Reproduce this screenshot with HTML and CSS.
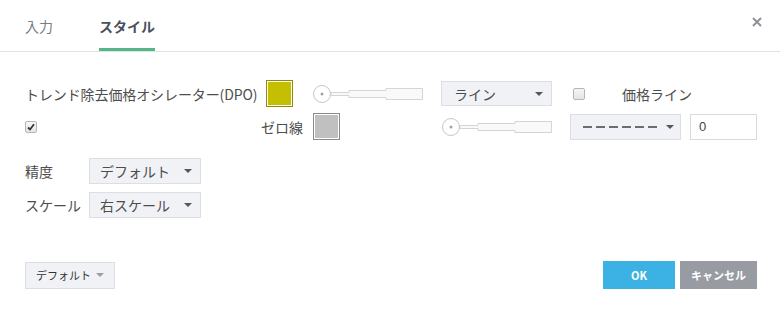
FILE: index.html
```html
<!DOCTYPE html>
<html lang="ja">

<head>
  <meta charset="UTF-8" />
  <title>スタイル</title>
  <link rel="stylesheet" href="styles.css">
</head>

<body>
  <div class="dialog">
    <div class="header">
      <div class="tabs">
        <div class="tab">入力</div>
        <div class="tab active">スタイル</div>
      </div>
      <button class="close" aria-label="閉じる">
        <svg width="10" height="10" viewBox="0 0 10 10">
          <path d="M1 1 L9 9 M9 1 L1 9" stroke="#8f919a" stroke-width="2" />
        </svg>
      </button>
    </div>

    <div class="body">
      <div class="plot-rows">
        <div class="row">
          <div class="cell-title">トレンド除去価格オシレーター(DPO)</div>
          <div class="swatch yellow"></div>
          <svg class="slider" width="110" height="20" viewBox="0 0 110 20">
            <path d="M18 8.5 H36 V6.5 H73 V4.5 H109.5 V15.5 H73 V13.5 H36 V11.5 H18 Z" fill="#f9f9f9" stroke="#d3d5da" />
            <circle cx="9" cy="10" r="8.5" fill="#fff" stroke="#c3c6ce" />
            <circle cx="9" cy="10" r="1.5" fill="#a0a2aa" />
          </svg>
          <div class="select line-select">
            <span>ライン</span>
            <i class="caret"></i>
          </div>
          <span class="check"></span>
          <span class="check-label">価格ライン</span>
        </div>

        <div class="row">
          <div class="cell-zero">
            <span class="check checked">
              <svg width="8" height="8" viewBox="0 0 8 8">
                <path d="M1 4.5 L3 6.5 L7 1.2" stroke="#333" stroke-width="1.8" fill="none" />
              </svg>
            </span>
            <span class="zero-label">ゼロ線</span>
          </div>
          <div class="swatch gray"></div>
          <svg class="slider slider-zero" width="110" height="20" viewBox="0 0 110 20">
            <path d="M18 8.5 H36 V6.5 H73 V4.5 H109.5 V15.5 H73 V13.5 H36 V11.5 H18 Z" fill="#f9f9f9" stroke="#d3d5da" />
            <circle cx="9" cy="10" r="8.5" fill="#fff" stroke="#c3c6ce" />
            <circle cx="9" cy="10" r="1.5" fill="#a0a2aa" />
          </svg>
          <div class="select dash-select">
            <svg width="74" height="4" viewBox="0 0 74 4">
              <line x1="0" y1="2" x2="74" y2="2" stroke="#6b6d74" stroke-width="2" stroke-dasharray="9 4" />
            </svg>
            <i class="caret"></i>
          </div>
          <div class="num-input">0</div>
        </div>
      </div>

      <div class="scale-rows">
        <div class="row">
          <div class="cell-label">精度</div>
          <div class="select wide">
            <span>デフォルト</span>
            <i class="caret"></i>
          </div>
        </div>
        <div class="row">
          <div class="cell-label">スケール</div>
          <div class="select wide">
            <span>右スケール</span>
            <i class="caret"></i>
          </div>
        </div>
      </div>
    </div>

    <div class="footer">
      <div class="select defaults">
        <span>デフォルト</span>
        <i class="caret light"></i>
      </div>
      <div class="actions">
        <button class="btn ok">OK</button>
        <button class="btn cancel">キャンセル</button>
      </div>
    </div>
  </div>
</body>

</html>
```

FILE: styles.css
```css
* {
  box-sizing: border-box;
}

body {
  margin: 0;
  padding: 0;
  font-family: "Noto Sans CJK JP", "Noto Sans", sans-serif;
  background: #fff;
  color: #4d4d4d;
  font-size: 14px;
}

.dialog {
  width: 780px;
  height: 313px;
}

.header {
  height: 52px;
  border-bottom: 1px solid #e0e2e6;
  display: flex;
  justify-content: space-between;
  padding: 0 18px 0 25px;
}

.tabs {
  display: flex;
  gap: 46px;
}

.tab {
  height: 51px;
  line-height: 50px;
  color: #7a7c82;
  font-size: 14px;
  border-bottom: 3px solid transparent;
  padding-top: 1px;
}

.tab.active {
  color: #4a4f5c;
  font-weight: bold;
  border-bottom-color: #52b886;
}

.close {
  border: none;
  background: none;
  padding: 0;
  width: 10px;
  height: 10px;
  margin-top: 17px;
  cursor: pointer;
  display: flex;
}

.body {
  padding: 28px 23px 0 25px;
}

.row {
  display: flex;
  align-items: center;
  height: 27px;
}

.plot-rows {
  display: flex;
  flex-direction: column;
  gap: 6px;
}

.scale-rows {
  display: flex;
  flex-direction: column;
  gap: 7px;
  margin-top: 17px;
}

.cell-title {
  width: 241px;
  white-space: nowrap;
  line-height: 20px;
  letter-spacing: -0.1px;
}

.swatch {
  width: 27px;
  height: 27px;
  border: 1px solid #8a8a8a;
  box-shadow: inset 0 0 0 1px #fff;
}

.swatch.yellow {
  background: #c4bf00;
  border-color: #8e8b00;
}

.swatch.gray {
  background: #c0c0c0;
}

.slider {
  margin-left: 20px;
  display: block;
}

.slider-zero {
  margin-left: 102px;
}

.select {
  display: flex;
  align-items: center;
  justify-content: space-between;
  height: 26px;
  background: #f1f2f6;
  border: 1px solid #dcdee3;
  padding: 0 8px 0 12px;
  color: #4d4d4d;
  line-height: 20px;
}

.line-select {
  width: 111px;
  height: 25px;
  margin-left: 18px;
}

.dash-select {
  width: 111px;
  margin-left: 18px;
  padding-left: 12px;
  padding-right: 6px;
}

.caret {
  width: 0;
  height: 0;
  border-left: 4px solid transparent;
  border-right: 4px solid transparent;
  border-top: 4px solid #55575e;
}

.caret.light {
  border-top-color: #9c9ea4;
}

.check {
  width: 12px;
  height: 12px;
  border: 1px solid #b4b6bc;
  border-radius: 2px;
  background: linear-gradient(#f6f6f6, #e4e4e4);
  display: flex;
  align-items: center;
  justify-content: center;
  margin-left: 21px;
}

.check.checked {
  margin-left: 0;
}

.check-label {
  margin-left: 37px;
}

.cell-zero {
  width: 278px;
  display: flex;
  align-items: center;
  justify-content: space-between;
}

.cell-zero + .swatch {
  margin-left: 10px;
}

.num-input {
  width: 67px;
  height: 26px;
  margin-left: 9px;
  border: 1px solid #d9dadf;
  background: #fff;
  padding-left: 8px;
  line-height: 24px;
  font-family: "Liberation Sans", sans-serif;
  font-size: 13px;
  color: #444;
}

.cell-label {
  width: 64px;
}

.select.wide {
  width: 112px;
  padding-left: 10px;
}

.footer {
  display: flex;
  justify-content: space-between;
  align-items: center;
  padding: 0 23px 0 25px;
  margin-top: 43px;
}

.defaults {
  width: 90px;
  height: 27px;
  font-size: 11px;
  color: #333;
  padding: 0 10px 0 10px;
}

.actions {
  display: flex;
  gap: 5px;
}

.btn {
  height: 28px;
  border: none;
  color: #fff;
  font-family: "Noto Sans CJK JP", sans-serif;
  font-weight: bold;
  font-size: 11px;
  padding: 0;
  cursor: pointer;
}

.btn.ok {
  width: 72px;
  background: #3bb2e3;
}

.btn.cancel {
  width: 77px;
  background: #999ba3;
}
```
